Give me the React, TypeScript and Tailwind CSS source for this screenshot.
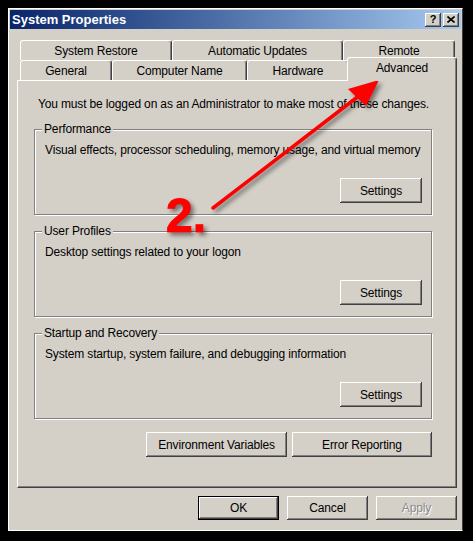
import React from 'react';

type Tab = { label: string; w: string };

const backRow: Tab[] = [
  { label: 'System Restore', w: 'w-[152px]' },
  { label: 'Automatic Updates', w: 'w-[171px]' },
  { label: 'Remote', w: 'w-[112px]' },
];

const frontRow: Tab[] = [
  { label: 'General', w: 'w-[92px]' },
  { label: 'Computer Name', w: 'w-[135px]' },
  { label: 'Hardware', w: 'w-[102px]' },
];

const groups = [
  { title: 'Performance', text: 'Visual effects, processor scheduling, memory usage, and virtual memory' },
  { title: 'User Profiles', text: 'Desktop settings related to your logon' },
  { title: 'Startup and Recovery', text: 'System startup, system failure, and debugging information' },
];

const TabItem: React.FC<Tab> = ({ label, w }) => (
  <div
    className={`${w} h-[20px] flex items-center justify-center border-l border-t border-r border-white border-r-[#404040] rounded-t-[3px] shadow-[inset_-1px_0_#808080] text-[12px] tracking-[-0.15px] text-black`}
  >
    {label}
  </div>
);

type BtnProps = { label: string; w: string; h: string; isDefault?: boolean; disabled?: boolean };

const WinButton: React.FC<BtnProps> = ({ label, w, h, isDefault, disabled }) => (
  <div
    className={`${w} ${h} flex items-center justify-center bg-[#d4d0c8] text-[12px] tracking-[-0.15px] ${
      isDefault
        ? 'border border-black shadow-[inset_-1px_-1px_#404040,inset_1px_1px_#ffffff,inset_-2px_-2px_#808080]'
        : 'shadow-[inset_-1px_-1px_#404040,inset_1px_1px_#ffffff,inset_-2px_-2px_#808080]'
    } ${disabled ? 'text-[#8a8a8a] [text-shadow:1px_1px_0_#ffffff]' : 'text-black'}`}
  >
    {label}
  </div>
);

const GroupBox: React.FC<{ title: string; text: string }> = ({ title, text }) => (
  <div className="relative w-[398px] h-[86px] border border-[#808080] shadow-[1px_1px_0_#ffffff,inset_1px_1px_0_#ffffff]">
    <span className="absolute -top-[8px] left-[7px] px-[2px] bg-[#d4d0c8] text-[12px] leading-[14px] tracking-[-0.15px] text-black">
      {title}
    </span>
    <div className="pl-[10px] pt-[13px] text-[12px] leading-[14px] tracking-[-0.15px] text-black">{text}</div>
    <div className="flex justify-end pr-[9px] mt-[21px]">
      <WinButton label="Settings" w="w-[82px]" h="h-[25px]" />
    </div>
  </div>
);

const CaptionButton: React.FC<{ children: React.ReactNode }> = ({ children }) => (
  <div className="w-[16px] h-[14px] flex items-center justify-center bg-[#d4d0c8] shadow-[inset_-1px_-1px_#404040,inset_1px_1px_#ffffff,inset_-2px_-2px_#808080]">
    {children}
  </div>
);

const App: React.FC = () => {
  return (
    <div className="relative w-[473px] h-[541px] bg-black pt-[8px] pl-[8px] font-['Liberation_Sans',Arial,sans-serif] overflow-hidden">
      <div className="w-[455px] h-[523px] bg-[#d4d0c8] border-l border-t border-b border-white border-r border-r-[#404040] p-[1px]">
        {/* caption bar */}
        <div className="h-[19px] flex items-center justify-between bg-gradient-to-r from-[#0a246a] to-[#a6caf0] pl-[2px] pr-[2px]">
          <span className="text-white font-bold text-[13px] leading-[19px]">System Properties</span>
          <div className="flex gap-[2px]">
            <CaptionButton>
              <span className="text-[11px] font-bold leading-none text-black">?</span>
            </CaptionButton>
            <CaptionButton>
              <svg width="8" height="7" viewBox="0 0 8 7">
                <path d="M0.5 0.5 L7.5 6.5 M7.5 0.5 L0.5 6.5" stroke="#000" strokeWidth="1.6" />
              </svg>
            </CaptionButton>
          </div>
        </div>

        {/* tabs */}
        <div className="mt-[11px] ml-[10px]">
          <div className="flex">
            {backRow.map((t) => (
              <TabItem key={t.label} {...t} />
            ))}
          </div>
          <div className="flex items-start h-[20px]">
            {frontRow.map((t) => (
              <TabItem key={t.label} {...t} />
            ))}
            <div className="relative z-10 w-[110px] h-[24px] -mt-[3px] -ml-[2px] flex justify-center pt-[1px] bg-[#d4d0c8] border-l border-t border-r border-white border-r-[#404040] rounded-t-[3px] shadow-[inset_-1px_0_#808080] text-[12px] tracking-[-0.15px] text-black">
              Advanced
            </div>
          </div>
        </div>

        {/* tab page */}
        <div className="ml-[7px] w-[440px] h-[408px] border-l border-t border-white border-r border-b border-r-[#404040] border-b-[#404040] shadow-[inset_-1px_-1px_#808080] px-[16px] pt-[16px]">
          <p className="ml-[4px] text-[12px] leading-[14px] tracking-[-0.15px] text-black">
            You must be logged on as an Administrator to make most of these changes.
          </p>
          <div className="mt-[18px] flex flex-col gap-[16px]">
            {groups.map((g) => (
              <GroupBox key={g.title} {...g} />
            ))}
          </div>
          <div className="w-[398px] mt-[13px] flex justify-end gap-[5px]">
            <WinButton label="Environment Variables" w="w-[141px]" h="h-[25px]" />
            <WinButton label="Error Reporting" w="w-[140px]" h="h-[25px]" />
          </div>
        </div>

        {/* dialog buttons */}
        <div className="ml-[7px] w-[440px] mt-[8px] flex justify-end gap-[8px]">
          <WinButton label="OK" w="w-[81px]" h="h-[24px]" isDefault />
          <WinButton label="Cancel" w="w-[81px]" h="h-[24px]" />
          <WinButton label="Apply" w="w-[81px]" h="h-[24px]" disabled />
        </div>
      </div>

      {/* annotation arrow */}
      <svg
        className="absolute inset-0 pointer-events-none drop-shadow-[3px_3px_2px_rgba(0,0,0,0.45)]"
        width="473"
        height="541"
        viewBox="0 0 473 541"
      >
        <line x1="213" y1="208" x2="360" y2="95" stroke="#ff0000" strokeWidth="3.5" strokeLinecap="round" />
        <polygon points="379,80 348,89 366,106" fill="#ff0000" />
      </svg>
      <span className="absolute left-[166px] top-[192px] text-[48px] leading-[48px] font-bold text-[#ff0000] [-webkit-text-stroke:1px_#ff0000] drop-shadow-[3px_3px_2px_rgba(0,0,0,0.45)]">
        2.
      </span>
    </div>
  );
};

export default App;
